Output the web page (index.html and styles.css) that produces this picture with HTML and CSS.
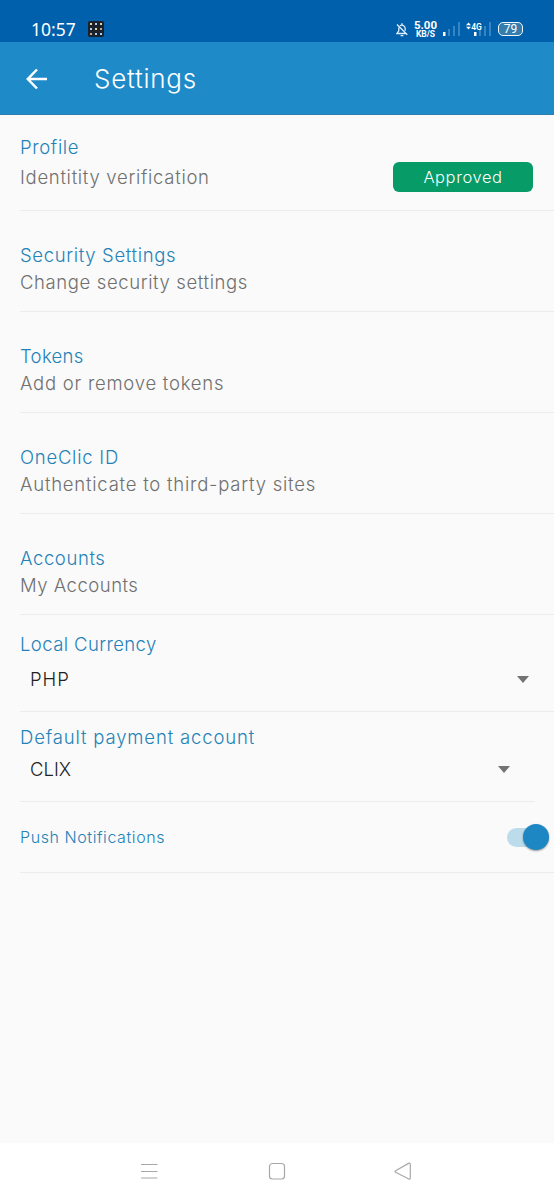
FILE: index.html
```html
<!DOCTYPE html>
<html lang="en">
<head>
<meta charset="utf-8">
<title>Settings</title>
<link rel="stylesheet" href="styles.css">
</head>
<body>
<div class="status">
  <span class="clock">10:57</span>
  <svg class="app-badge" width="16" height="16" viewBox="0 0 16 16"><rect width="16" height="16" rx="2" fill="#1c222b"/><g fill="#e8d3a0"><rect x="2" y="2" width="2" height="2"/><rect x="12" y="2" width="2" height="2"/><rect x="7" y="7" width="2" height="2"/></g><g fill="#a9cdec"><rect x="7" y="2" width="2" height="2"/><rect x="2" y="7" width="2" height="2"/><rect x="12" y="12" width="2" height="2"/><rect x="7" y="12" width="2" height="2"/></g><g fill="#c3a38d"><rect x="12" y="7" width="2" height="2"/><rect x="2" y="12" width="2" height="2"/></g></svg>
  <svg class="bell" width="12" height="14" viewBox="0 0 12 14" fill="none" stroke="#e3effa" stroke-width="1.3"><path d="M6 .3v1.6M4 2.600C7 1 9.200 3.300 9.200 5.800v2M2.800 4.600v3.200L1 10.500h8.500M4.600 12.600h2.800M1 1.500l10.300 10.300"/></svg>
  <span class="rate"><b class="rate-num">5.00</b><b class="rate-unit">KB/S</b></span>
  <svg class="signal" width="17" height="14" viewBox="0 0 17 14"><path fill="#fff" d="M0 10h2.500v4H0z"/><path fill="#3584c3" d="M5 7h2v7H5zM10 4h2v10h-2zM15 0h2v14h-2z"/></svg>
  <svg class="signal-4g" width="26" height="14" viewBox="0 0 26 14"><path fill="#3584c3" d="M13 7h2v7h-2zM18 4h2v10h-2zM23 0h2v14h-2z"/><path fill="#fff" d="M8 10h2.500v4H8zM0 3.200 2.500.5 5 3.200zM0 4.800h5L2.500 7.500z"/><text class="net" x="5.200" y="7.500">4G</text></svg>
  <span class="battery">79</span>
</div>
<header class="bar">
  <svg class="back" width="22" height="22" viewBox="0 0 22 22" fill="none" stroke="#fff" stroke-width="2.500"><path d="M21 11H2M11 1.500 1.800 11l9.200 9.500"/></svg>
  <h1 class="heading">Settings</h1>
</header>
<main class="list">
  <section class="row profile">
    <div><h2 class="title t-profile">Profile</h2><p class="sub s-identity">Identitity verification</p></div>
    <span class="approved">Approved</span>
  </section>
  <section class="row"><h2 class="title t-security">Security Settings</h2><p class="sub s-security">Change security settings</p></section>
  <section class="row"><h2 class="title t-tokens">Tokens</h2><p class="sub s-tokens">Add or remove tokens</p></section>
  <section class="row"><h2 class="title t-id">OneClic ID</h2><p class="sub s-id">Authenticate to third-party sites</p></section>
  <section class="row"><h2 class="title t-accounts">Accounts</h2><p class="sub s-accounts">My Accounts</p></section>
  <section class="row currency"><h2 class="title t-currency">Local Currency</h2><div class="select"><span class="v-php">PHP</span><i class="caret"></i></div></section>
  <section class="row payment"><h2 class="title t-payment">Default payment account</h2><div class="select"><span class="v-clix">CLIX</span><i class="caret"></i></div></section>
  <section class="row push"><h2 class="title t-push">Push Notifications</h2><span class="switch"><i class="knob"></i></span></section>
</main>
<nav class="nav">
  <svg width="272" height="20" viewBox="0 0 272 20" fill="none" stroke="#a8a8a8" stroke-width="1.200"><path d="M1 3.500h16.500M1 10.500h16.500M1 17h16.500"/><rect x="129.500" y="2.500" width="15" height="15.500" rx="3"/><path d="M255.600 9.700 268.500 2.400q1.800-.8 1.800 1.200v13.400q-.1 1.700-1.500 1l-13.200-6.700q-1.200-.8 0-1.600z"/></svg>
</nav>
</body>
</html>
```
FILE: styles.css
```css
* { box-sizing: border-box; }
body { margin: 0; height: 1200px; display: flex; flex-direction: column; background: #fafafa; font-family: Inter, "Open Sans", sans-serif; font-weight: 300; overflow: hidden; }
h1, h2, p { margin: 0; font-weight: 300; white-space: nowrap; }
.status { height: 42px; background: #0060ac; color: #fff; display: flex; align-items: flex-start; padding: 20px 30px 0 31px; }
.clock { font: 400 17.5px/20px "Noto Sans", sans-serif; width: 57px; margin-top: -1px; white-space: nowrap; }
.app-badge { margin-top: 1px; }
.bell { margin: 3px 6px 0 292px; }
.rate { width: 23px; display: flex; flex-direction: column; align-items: center; font-family: Roboto, sans-serif; margin-right: 6px; }
.rate-num { font-size: 11.5px; font-weight: 700; line-height: 10px; }
.rate-unit { font-size: 8.5px; font-weight: 700; line-height: 9px; }
.signal { margin: 2px 6px 0 0; }
.signal-4g { margin: 2px 6px 0 0; }
.net { font: 600 8.5px Roboto, sans-serif; fill: #fff; }
.battery { width: 25px; height: 14px; margin-top: 2px; border: 1.5px solid #edf6fc; border-radius: 5px; background: #347dac; font: 400 12px/12px Roboto, sans-serif; text-align: center; }
.bar { height: 73px; background: #1e8ac8; display: flex; align-items: center; padding: 2px 0 0 26px; gap: 46px; border-bottom: 1px solid #2c7fb3; }
.heading { color: #fff; font-size: 26px; line-height: 30px; font-weight: 300; letter-spacing: .75px; }
.list { flex: 1; padding: 1px 0 0 20px; }
.row { height: 101px; padding-top: 31px; border-bottom: 1px solid #ececec; }
.title, .sub { font-size: 18.5px; line-height: 27px; }
.title { color: #2482b8; }
.sub { color: #707070; }
.t-profile, .t-security { letter-spacing: .65px; }
.t-tokens { letter-spacing: .3px; }
.t-id { letter-spacing: .75px; }
.t-accounts { letter-spacing: .6px; }
.t-currency { letter-spacing: .4px; }
.t-payment { letter-spacing: .85px; }
.t-push { letter-spacing: .58px; }
.s-identity { letter-spacing: .7px; }
.s-security { letter-spacing: .61px; }
.s-tokens { letter-spacing: .75px; }
.s-id { letter-spacing: .77px; }
.s-accounts { letter-spacing: .5px; }
.v-php { letter-spacing: 1px; }
.profile { height: 95px; padding: 18px 21px 0 0; display: flex; justify-content: space-between; }
.profile .sub { margin-top: 3px; }
.approved { width: 140px; height: 30px; margin-top: 28px; border-radius: 6px; background: #079b68; color: #fff; font-size: 16.5px; line-height: 30px; letter-spacing: .6px; text-align: center; }
.currency { height: 97px; padding-top: 16px; }
.payment { height: 90px; padding-top: 12px; margin-right: 19px; }
.select { display: flex; justify-content: space-between; align-items: center; height: 27px; padding: 0 25px 0 10px; color: #222; font-size: 18.5px; line-height: 27px; }
.currency .select { margin-top: 8px; }
.payment .select { margin-top: 5px; }
.caret { border: solid transparent; border-width: 7px 6.5px 0; border-top-color: #737373; }
.push { height: 71px; padding: 0 5px 0 0; display: flex; align-items: center; justify-content: space-between; }
.push .title { font-size: 16px; }
.switch { width: 42px; height: 19px; border-radius: 10px; background: #bcdcec; display: flex; align-items: center; justify-content: flex-end; }
.knob { flex: none; width: 26px; height: 26px; border-radius: 50%; background: #1d87c4; box-shadow: 0 1px 2px #0006; }
.nav { height: 57px; background: #fff; padding: 18px 0 0 140px; }
```
